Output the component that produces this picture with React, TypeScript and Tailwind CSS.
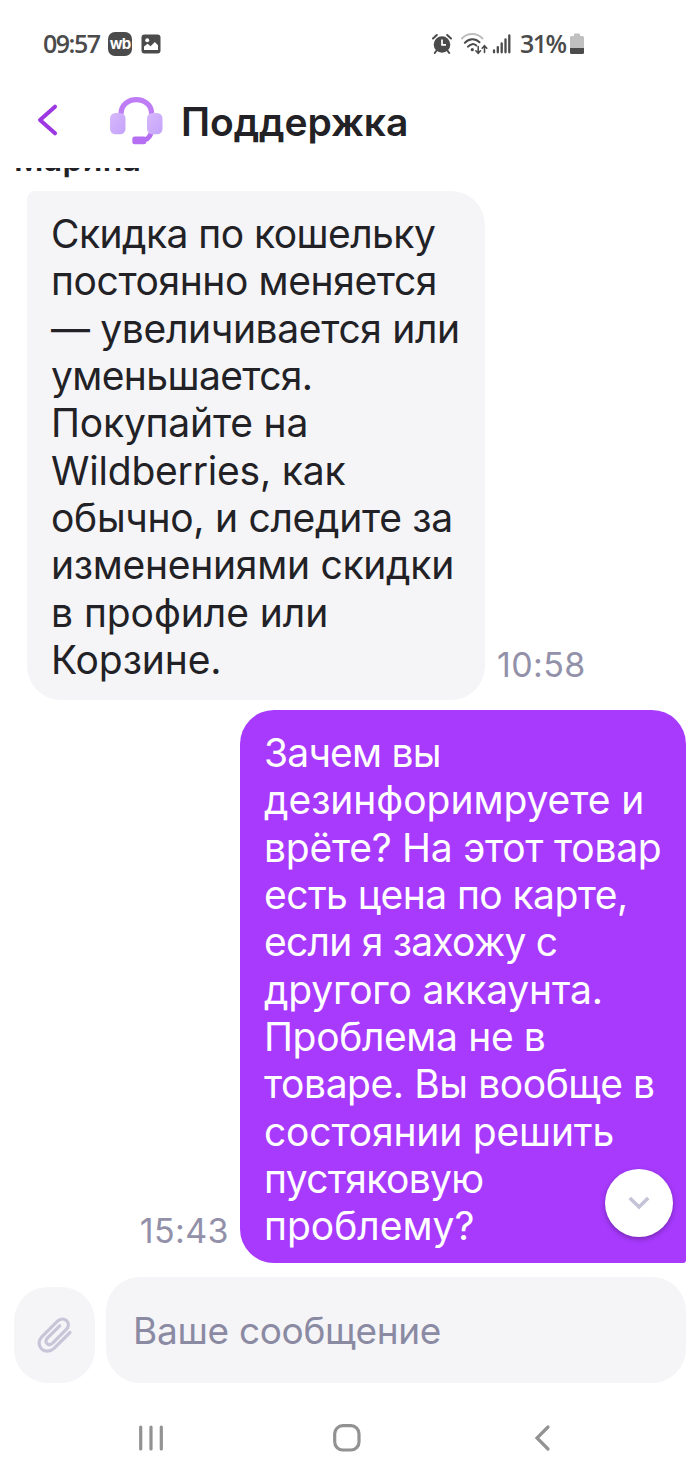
import React from 'react';

interface Line {
    text: string;
    tracking?: string;
}

const incoming: Line[] = [
    { text: 'Скидка по кошельку', tracking: 'tracking-[-0.55px]' },
    { text: 'постоянно меняется', tracking: 'tracking-[-0.4px]' },
    { text: '— увеличивается или', tracking: 'tracking-[-0.35px]' },
    { text: 'уменьшается.', tracking: 'tracking-[-0.62px]' },
    { text: 'Покупайте на', tracking: 'tracking-[-0.2px]' },
    { text: 'Wildberries, как', tracking: 'tracking-[-0.2px]' },
    { text: 'обычно, и следите за', tracking: 'tracking-[-0.3px]' },
    { text: 'изменениями скидки', tracking: 'tracking-[-0.27px]' },
    { text: 'в профиле или', tracking: 'tracking-[-0.05px]' },
    { text: 'Корзине.', tracking: 'tracking-[-0.1px]' },
];

const outgoing: Line[] = [
    { text: 'Зачем вы', tracking: 'tracking-[-0.8px]' },
    { text: 'дезинфоримруете и', tracking: 'tracking-[-0.05px]' },
    { text: 'врёте? На этот товар', tracking: 'tracking-[-0.25px]' },
    { text: 'есть цена по карте,', tracking: 'tracking-[-0.56px]' },
    { text: 'если я захожу с', tracking: 'tracking-[-0.77px]' },
    { text: 'другого аккаунта.', tracking: 'tracking-[-0.18px]' },
    { text: 'Проблема не в', tracking: 'tracking-[-0.36px]' },
    { text: 'товаре. Вы вообще в', tracking: 'tracking-[-0.43px]' },
    { text: 'состоянии решить', tracking: 'tracking-[-0.18px]' },
    { text: 'пустяковую', tracking: 'tracking-[-0.65px]' },
    { text: 'проблему?' },
];

const MessageText: React.FC<{ lines: Line[] }> = ({ lines }) => (
    <p className="text-[39px] leading-[47.35px] whitespace-nowrap">
        {lines.map((line) => (
            <span key={line.text} className={`block ${line.tracking ?? ''}`}>{line.text}</span>
        ))}
    </p>
);

const StatusBar: React.FC = () => (
    <div className="flex h-[88px] items-center pl-[43px] pr-[115px] text-[#4b4b4b]">
        <span className="w-[65px] whitespace-nowrap font-['Open_Sans',sans-serif] text-[25px] font-semibold tracking-[-1.5px]">09:57</span>
        <span className="flex size-6 items-center justify-center rounded-[7px] bg-[#4b4b4b] pb-[2px] font-['Inter',sans-serif] text-[15px] font-bold leading-none tracking-[-0.8px] text-white">wb</span>
        <svg className="ml-[9px]" width="20" height="20" viewBox="0 0 20 20">
            <rect x="0.5" y="0.5" width="19" height="19" rx="3" fill="currentColor" />
            <circle cx="6.2" cy="6.3" r="2" fill="#fff" />
            <path d="M3 16v-3.4l3.6-2.9 3 2.5 4.2-4.3 3.2 3.3v4.8z" fill="#fff" />
        </svg>
        <svg className="ml-auto" width="20" height="22" viewBox="0 0 20 22">
            <circle cx="10" cy="11.5" r="8.3" fill="currentColor" />
            <path d="M1 5.5 4.8 2M19 5.5 15.2 2M4.6 17.5 2.8 20M15.4 17.5 17.2 20" stroke="currentColor" strokeWidth="2" strokeLinecap="round" />
            <path d="M10 6.5v5.4h4" fill="none" stroke="#fff" strokeWidth="1.7" />
        </svg>
        <svg className="ml-[8px]" width="28" height="24" viewBox="0 0 28 24">
            <path d="M2 6.5C7.5 .5 17 .5 22.5 6.5" fill="none" stroke="#bdbdbd" strokeWidth="2" strokeLinecap="round" />
            <path d="M4.8 10.8C9 6 15.5 6 19.5 10.3M8 14.7C10.5 11.5 14 11.5 16.3 13.5" fill="none" stroke="currentColor" strokeWidth="2" strokeLinecap="round" />
            <circle cx="12.3" cy="17.7" r="1.6" fill="currentColor" />
            <path d="M18.2 14.5v6.5M15.9 18.8l2.3 2.5 2.3-2.5M24.5 20.5V14M22.2 16.2l2.3-2.5 2.3 2.5" fill="none" stroke="currentColor" strokeWidth="1.6" strokeLinecap="round" />
        </svg>
        <svg className="ml-[4px]" width="19" height="20" viewBox="0 0 19 20">
            <path d="M2 16.5v1.8M5.8 13.2v5.1M9.7 9.5v8.8M13.5 5.5v12.800M17.3 1.5v16.800" stroke="currentColor" strokeWidth="2.3" strokeLinecap="round" />
        </svg>
        <span className="ml-[9px] w-[49px] whitespace-nowrap font-['Open_Sans',sans-serif] text-[25px] font-semibold tracking-[-1.6px]">31%</span>
        <svg width="16" height="22" viewBox="0 0 16 22">
            <path d="M5 1.5Q5 .5 6 .5h4q1 0 1 1V3h2.500Q15 3 15 4.500V15H1V4.500Q1 3 2.500 3H5z" fill="#c0c0c0" />
            <path d="M1 15h14v4.500q0 1.500-1.500 1.500h-11Q1 21 1 19.500z" fill="currentColor" />
        </svg>
    </div>
);

const Header: React.FC = () => (
    <header className="flex h-20 items-center pl-[36px]">
        <svg className="mb-[16px]" width="24" height="34" viewBox="0 0 24 34">
            <path d="M19 3.7 4 17l15 13.3" fill="none" stroke="#9c37e2" strokeWidth="4" strokeLinecap="round" strokeLinejoin="round" />
        </svg>
        <svg className="mb-[14px] ml-[49px]" width="54" height="50" viewBox="0 0 54 50">
            <defs>
                <linearGradient id="ear" x1="0" y1="0" x2="1" y2="1">
                    <stop offset="0" stopColor="#d8b8fa" />
                    <stop offset="1" stopColor="#c3a3fb" />
                </linearGradient>
            </defs>
            <path d="M12 18C12-1.300 42.700-1.300 42.700 18" fill="none" stroke="#be7df5" strokeWidth="5.2" />
            <path d="M42 37.5C40 43 36 44.5 32 44.7" fill="none" stroke="#b66ff2" strokeWidth="5" />
            <rect x="23.3" y="40.5" width="14" height="7.7" rx="2.5" fill="#b66ff2" />
            <rect x="1" y="17" width="15.5" height="21.3" rx="5.5" fill="url(#ear)" />
            <rect x="38" y="17" width="15.5" height="21.3" rx="5.5" fill="url(#ear)" />
        </svg>
        <h1 className="mb-[14px] ml-[18px] text-[39px] font-semibold leading-none tracking-[-0.1px]">Поддержка</h1>
    </header>
);

const Chat: React.FC = () => (
    <main className="relative h-[1096px] overflow-hidden">
        <div className="-mt-[28px] pl-[14px] text-[32px] font-semibold leading-[39px] tracking-[0.3px]">Марина</div>
        <div className="mt-[12px] flex items-end pl-[27px]">
            <div className="h-[509px] w-[458px] rounded-[34px] rounded-tl-[8px] bg-[#f5f5f8] pl-[24px] pt-[19px]">
                <MessageText lines={incoming} />
            </div>
            <time className="mb-[14px] ml-[12px] text-[34px] leading-[42px] tracking-[0.4px] text-[#9291a9]">10:58</time>
        </div>
        <div className="mt-[10px] flex items-end justify-end pr-[14px]">
            <time className="mb-[11px] mr-[11px] text-[34px] leading-[42px] tracking-[0.4px] text-[#9291a9]">15:43</time>
            <div className="h-[553px] w-[446px] rounded-[34px] rounded-br-[3px] bg-[#a73afd] pl-[24px] pt-[19px] text-white">
                <MessageText lines={outgoing} />
            </div>
        </div>
        <button className="absolute bottom-[27px] right-[27px] flex size-[68px] items-center justify-center rounded-full bg-white shadow-[0_2px_5px_rgba(0,0,0,0.3)]">
            <svg width="22" height="14" viewBox="0 0 22 14">
                <path d="m1.8 2 9.2 9 9.2-9" fill="none" stroke="#c5c3d6" strokeWidth="3.6" />
            </svg>
        </button>
    </main>
);

const Composer: React.FC = () => (
    <div className="flex h-[134px] items-start gap-[11px] px-[14px] pt-[13px]">
        <button className="mt-[10px] flex h-[96px] w-[81px] shrink-0 items-center justify-center rounded-[34px] bg-[#f5f5f8]">
            <svg width="38" height="40" viewBox="0 0 38 40">
                <path d="M34 17.5 18.3 33.2C9.5 41.5-2.2 31 5.8 21.8L21.5 6.2C27.8 0 36.3 8.2 30.3 14.5L16.6 28.2C12.6 32 7.5 27.2 11.3 23.2L23.7 10.8" fill="none" stroke="#c7c5d7" strokeWidth="3.2" strokeLinecap="round" />
            </svg>
        </button>
        <div className="flex h-[106px] flex-1 items-center rounded-[34px] bg-[#f5f5f8] pl-[27px] pt-[2px] text-[37px] tracking-[-0.3px] text-[#8b8aa3]">Ваше сообщение</div>
    </div>
);

const NavBar: React.FC = () => (
    <nav className="flex h-[80px] items-center pl-[138px] pr-[148px]">
        <svg width="26" height="28" viewBox="0 0 26 28">
            <path d="M2.7 3v22M13 3v22M23.3 3v22" stroke="#929292" strokeWidth="3.2" strokeLinecap="round" />
        </svg>
        <svg className="ml-[168px]" width="30" height="30" viewBox="0 0 30 30">
            <rect x="2.7" y="2.7" width="24.3" height="24.3" rx="8" fill="none" stroke="#929292" strokeWidth="3.2" />
        </svg>
        <svg className="ml-auto" width="18" height="28" viewBox="0 0 18 28">
            <path d="M14 3 3 14l11 11" fill="none" stroke="#929292" strokeWidth="3.2" strokeLinecap="round" />
        </svg>
    </nav>
);

const App: React.FC = () => (
    <div className="h-[1478px] w-[700px] overflow-hidden bg-white font-['Inter',sans-serif] text-[#222226]">
        <StatusBar />
        <Header />
        <Chat />
        <Composer />
        <NavBar />
    </div>
);

export default App;
